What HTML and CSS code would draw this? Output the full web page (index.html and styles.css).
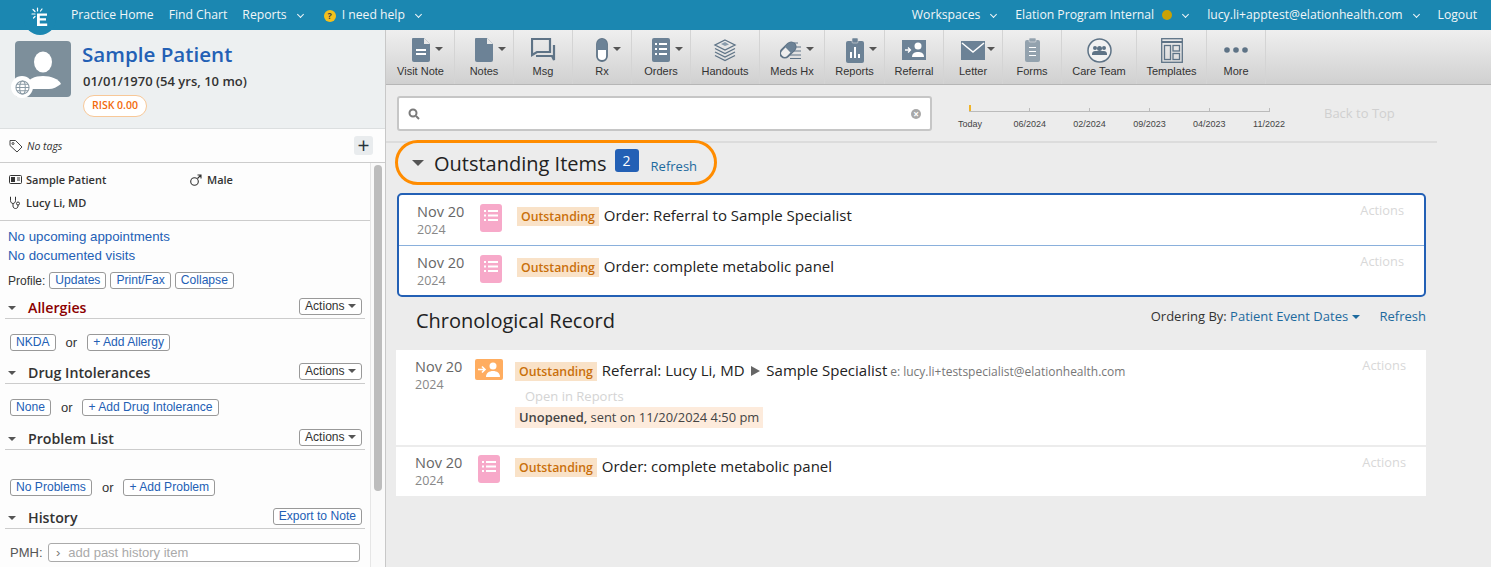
FILE: index.html
```html
<!DOCTYPE html>
<html lang="en">

<head>
    <meta charset="UTF-8">
    <title>Sample Patient</title>
    <link rel="stylesheet" href="styles.css">
</head>

<body>
    <header class="topbar">
        <div class="logo">
            <svg width="24" height="30" viewBox="0 0 24 30">
                <g stroke="#fff" stroke-width="1.200" stroke-linecap="round">
                    <path d="M9.500 8v3M5 9.500l2 2M4 14h3M5.500 18l1.500-1.500M14 9l-1.500 2" />
                </g>
                <path d="M9 13.500h10v2.300h-7.200v2.500h6.200v2.300h-6.200v3h7.400v2.400H9z" fill="#fff" />
            </svg>
        </div>
        <nav class="nav-left">
            <a>Practice Home</a>
            <a>Find Chart</a>
            <a class="has-chev">Reports</a>
            <a class="has-chev help"><span class="help-dot">?</span>I need help</a>
        </nav>
        <nav class="nav-right">
            <a class="has-chev">Workspaces</a>
            <a class="has-chev">Elation Program Internal<span class="status-dot"></span></a>
            <a class="has-chev">lucy.li+apptest@elationhealth.com</a>
            <a>Logout</a>
        </nav>
    </header>

    <div class="layout">
        <aside class="sidebar">
            <div class="patient">
                <div class="avatar">
                    <svg width="56" height="56" viewBox="0 0 56 56">
                        <rect width="56" height="56" rx="4" fill="#7d8f9b" />
                        <ellipse cx="28" cy="21" rx="9" ry="10.500" fill="#fff" />
                        <path d="M10 46c2-8 10-11 18-11s16 3 18 8c-4 3-8 5-12 5H14z" fill="#fff" />
                    </svg>
                    <span class="globe">
                        <svg width="15" height="15" viewBox="0 0 16 16" fill="none" stroke="#8a9aa5" stroke-width="1.100">
                            <circle cx="8" cy="8" r="7" />
                            <ellipse cx="8" cy="8" rx="3" ry="7" />
                            <path d="M1 8h14M2 4.500h12M2 11.500h12" />
                        </svg>
                    </span>
                </div>
                <div class="patient-info">
                    <h1>Sample Patient</h1>
                    <p>01/01/1970 (54 yrs, 10 mo)</p>
                    <span class="risk">RISK 0.00</span>
                </div>
            </div>
            <div class="tags">
                <svg width="14" height="14" viewBox="0 0 14 14" fill="none" stroke="#444" stroke-width="1">
                    <path d="M1 1.500h5.500l6.500 6.500-5 5L1 6.500z" />
                    <circle cx="4" cy="4.500" r="1" />
                </svg>
                <em>No tags</em>
                <span class="tag-add">+</span>
            </div>
            <div class="side-scroll">
                <div class="side-body">
                    <div class="demo">
                        <div class="demo-row">
                            <span class="demo-name">
                                <svg width="13" height="9" viewBox="0 0 13 9">
                                    <rect x=".5" y=".5" width="12" height="8" rx="1" fill="none" stroke="#333" />
                                    <rect x="2" y="2" width="4" height="5" fill="#333" />
                                    <path d="M8 3h3M8 5h3" stroke="#333" />
                                </svg>
                                Sample Patient
                            </span>
                            <span class="demo-sex">
                                <svg width="12" height="12" viewBox="0 0 12 12" fill="none" stroke="#333" stroke-width="1.100">
                                    <circle cx="4.500" cy="7.500" r="3.800" />
                                    <path d="M7.500 4.500L11 1M7.500 1H11v3.500" />
                                </svg>
                                Male
                            </span>
                        </div>
                        <div class="demo-row">
                            <span class="demo-name">
                                <svg width="13" height="13" viewBox="0 0 12 13" fill="none" stroke="#333" stroke-width="1">
                                    <path d="M1.500 1H1v3.500c0 2 1.300 3 2.500 3S6 6.500 6 4.500V1h-.5M3.500 7.500V10c0 1.500 1 2.500 2.500 2.500S8.500 11.500 8.500 10V9" />
                                    <circle cx="8.500" cy="7.500" r="1.500" />
                                </svg>
                                Lucy Li, MD
                            </span>
                        </div>
                    </div>
                    <div class="appts">
                        <a>No upcoming appointments</a>
                        <a>No documented visits</a>
                        <div class="profile">Profile:
                            <span class="btn">Updates</span>
                            <span class="btn">Print/Fax</span>
                            <span class="btn">Collapse</span>
                        </div>
                    </div>

                    <section class="sec">
                        <div class="sec-head">
                            <i class="caret"></i>
                            <h3 class="alert">Allergies</h3>
                            <span class="btn btn-dark">Actions <i class="caret-sm"></i></span>
                        </div>
                        <div class="sec-line line-allergy">
                            <span class="btn">NKDA</span> <span class="or">or</span> <span class="btn">+ Add Allergy</span>
                        </div>
                    </section>
                    <section class="sec">
                        <div class="sec-head">
                            <i class="caret"></i>
                            <h3>Drug Intolerances</h3>
                            <span class="btn btn-dark">Actions <i class="caret-sm"></i></span>
                        </div>
                        <div class="sec-line line-drug">
                            <span class="btn">None</span> <span class="or">or</span> <span class="btn">+ Add Drug Intolerance</span>
                        </div>
                    </section>
                    <section class="sec">
                        <div class="sec-head">
                            <i class="caret"></i>
                            <h3>Problem List</h3>
                            <span class="btn btn-dark">Actions <i class="caret-sm"></i></span>
                        </div>
                        <div class="sec-line line-problem">
                            <span class="btn">No Problems</span> <span class="or">or</span> <span class="btn">+ Add Problem</span>
                        </div>
                    </section>
                    <section class="sec">
                        <div class="sec-head">
                            <i class="caret"></i>
                            <h3>History</h3>
                            <span class="btn">Export to Note</span>
                        </div>
                        <div class="pmh">
                            <label>PMH:</label>
                            <div class="pmh-input"><span class="pmh-chev">›</span>add past history item</div>
                        </div>
                    </section>
                </div>
                <div class="scroll-track"><div class="scroll-thumb"></div></div>
            </div>
        </aside>

        <main class="main">
            <div class="toolbar">
                <div class="tool">
                    <div class="tool-icon">
                        <svg width="18" height="24" viewBox="0 0 18 24">
                            <path d="M1 0h11l6 6v16a2 2 0 0 1-2 2H2a2 2 0 0 1-2-2V1a1 1 0 0 1 1-1z" fill="#6c8296" />
                            <path d="M12 0l6 6h-6z" fill="#e8e8e8" />
                            <path d="M4 11h10v2H4zM4 15h10v2H4z" fill="#fff" />
                        </svg>
                        <i class="tool-caret"></i>
                    </div>
                    Visit Note
                </div>
                <div class="tool">
                    <div class="tool-icon">
                        <svg width="18" height="24" viewBox="0 0 18 24">
                            <path d="M1 0h11l6 6v16a2 2 0 0 1-2 2H2a2 2 0 0 1-2-2V1a1 1 0 0 1 1-1z" fill="#6c8296" />
                            <path d="M12 0l6 6h-6z" fill="#e8e8e8" />
                        </svg>
                        <i class="tool-caret"></i>
                    </div>
                    Notes
                </div>
                <div class="tool">
                    <div class="tool-icon">
                        <svg width="25" height="24" viewBox="0 0 25 24" fill="none" stroke="#5e7386" stroke-width="2.200">
                            <path d="M1 1h18v13H6l-5 3z" />
                            <path d="M5 18h16l2 4V7" />
                        </svg>
                    </div>
                    Msg
                </div>
                <div class="tool">
                    <div class="tool-icon">
                        <svg width="12" height="24" viewBox="0 0 12 24">
                            <rect x="1" y="1" width="10" height="22" rx="5" fill="#fff" stroke="#5e7386" stroke-width="1.800" />
                            <path d="M1 12V6a5 5 0 0 1 10 0v6z" fill="#6c8296" />
                        </svg>
                        <i class="tool-caret"></i>
                    </div>
                    Rx
                </div>
                <div class="tool">
                    <div class="tool-icon">
                        <svg width="18" height="24" viewBox="0 0 18 24">
                            <rect width="18" height="24" rx="2" fill="#6c8296" />
                            <path d="M3 5h2v2H3zM7 5h8v2H7zM3 10h2v2H3zM7 10h8v2H7zM3 15h2v2H3zM7 15h8v2H7z" fill="#fff" />
                        </svg>
                        <i class="tool-caret"></i>
                    </div>
                    Orders
                </div>
                <div class="tool">
                    <div class="tool-icon">
                        <svg width="24" height="24" viewBox="0 0 24 24" fill="none" stroke="#5e7386" stroke-width="1.300">
                            <path d="M12 2l10 5-10 5L2 7z" />
                            <path d="M8 6l4-2 4 2.500-4 1.500z" fill="#8a9cac" stroke="none" />
                            <path d="M2 10.500l10 5 10-5M2 14l10 5 10-5M2 17.500l10 5 10-5" />
                        </svg>
                    </div>
                    Handouts
                </div>
                <div class="tool">
                    <div class="tool-icon">
                        <svg width="24" height="20" viewBox="0 0 24 20">
                            <path d="M14 3h4M13 7h8M11 11h10M10 15h11M10 18.500h11" stroke="#5e7386" stroke-width="1.200" />
                            <g transform="rotate(-45 8 10)">
                                <rect x="-1" y="5.500" width="18" height="9" rx="4.500" fill="#eee" stroke="#5e7386" stroke-width="1.800" />
                                <path d="M8 5.500h4.500a4.500 4.500 0 0 1 0 9H8z" fill="#6c8296" />
                            </g>
                        </svg>
                        <i class="tool-caret tool-caret-close"></i>
                    </div>
                    Meds Hx
                </div>
                <div class="tool">
                    <div class="tool-icon">
                        <svg width="18" height="25" viewBox="0 0 18 25">
                            <rect y="3" width="18" height="22" rx="2" fill="#6c8296" />
                            <rect x="6" y="0" width="6" height="5" rx="1" fill="#6c8296" stroke="#ddd" stroke-width=".6" />
                            <path d="M4 14h2v6H4zM8 9h2v11H8zM12 16h2v4h-2z" fill="#fff" />
                        </svg>
                        <i class="tool-caret"></i>
                    </div>
                    Reports
                </div>
                <div class="tool">
                    <div class="tool-icon">
                        <svg width="24" height="20" viewBox="0 0 24 20">
                            <rect width="24" height="20" fill="#6c8296" />
                            <circle cx="16" cy="6" r="3.500" fill="#fff" />
                            <path d="M10 17c0-4 3-5 6-5s6 1 6 5z" fill="#fff" />
                            <path d="M3 10h5M6 7.500l2.500 2.500L6 12.500" stroke="#fff" stroke-width="1.300" fill="none" />
                        </svg>
                    </div>
                    Referral
                </div>
                <div class="tool">
                    <div class="tool-icon">
                        <svg width="24" height="19" viewBox="0 0 24 19">
                            <rect width="24" height="19" fill="#6c8296" />
                            <path d="M1 2l11 9 11-9" fill="none" stroke="#fff" stroke-width="1.500" />
                        </svg>
                        <i class="tool-caret tool-caret-close"></i>
                    </div>
                    Letter
                </div>
                <div class="tool">
                    <div class="tool-icon">
                        <svg width="15" height="24" viewBox="0 0 15 24">
                            <rect y="2" width="15" height="22" rx="2" fill="#93a2ae" />
                            <rect x="4" y="0" width="7" height="4" rx="1" fill="#93a2ae" stroke="#e8e8e8" stroke-width=".6" />
                            <path d="M4 9h7v1H4zM4 13h7v1H4zM4 17h7v1H4z" fill="#fff" />
                        </svg>
                    </div>
                    Forms
                </div>
                <div class="tool">
                    <div class="tool-icon">
                        <svg width="25" height="25" viewBox="0 0 25 25">
                            <circle cx="12.500" cy="12.500" r="11.500" fill="#f2f2f2" stroke="#5e7386" stroke-width="1.500" />
                            <circle cx="8" cy="10" r="2" fill="#5e7386" />
                            <circle cx="17" cy="10" r="2" fill="#5e7386" />
                            <circle cx="12.500" cy="10.500" r="2.500" fill="#5e7386" />
                            <path d="M5 16c0-2 1.500-3 3-3h9c1.500 0 3 1 3 3v1H5z" fill="#5e7386" />
                        </svg>
                    </div>
                    Care Team
                </div>
                <div class="tool">
                    <div class="tool-icon">
                        <svg width="22" height="25" viewBox="0 0 22 25" fill="none" stroke="#5e7386" stroke-width="1.300">
                            <rect x=".7" y=".7" width="20.600" height="23.600" />
                            <path d="M1 4h20" stroke-width="2" />
                            <rect x="3.500" y="7.500" width="6" height="14" />
                            <rect x="12" y="7.500" width="6.500" height="5.500" />
                            <rect x="12" y="15.500" width="6.500" height="6" />
                        </svg>
                    </div>
                    Templates
                </div>
                <div class="tool">
                    <div class="tool-icon">
                        <svg width="24" height="6" viewBox="0 0 24 6" fill="#5e7386">
                            <circle cx="3" cy="3" r="2.800" />
                            <circle cx="12" cy="3" r="2.800" />
                            <circle cx="21" cy="3" r="2.800" />
                        </svg>
                    </div>
                    More
                </div>
            </div>

            <div class="content">
                <div class="search-row">
                    <div class="search-box">
                        <svg width="12" height="12" viewBox="0 0 12 12" fill="none" stroke="#7a7a7a" stroke-width="2">
                            <circle cx="5" cy="5" r="3.500" />
                            <path d="M8 8l3 3" />
                        </svg>
                        <span class="search-clear">×</span>
                    </div>
                    <div class="timeline">
                        <div class="tl-line"></div>
                        <div class="tl-labels">
                            <span>Today</span><span>06/2024</span><span>02/2024</span><span>09/2023</span><span>04/2023</span><span>11/2022</span>
                        </div>
                    </div>
                    <span class="back-top">Back to Top</span>
                </div>

                <div class="outstanding-head">
                    <i class="caret caret-lg"></i>
                    <h2>Outstanding Items</h2>
                    <span class="count">2</span>
                    <a class="link">Refresh</a>
                </div>

                <div class="out-card">
                    <div class="item out-item">
                        <div class="item-date"><b>Nov 20</b><span>2024</span></div>
                        <div class="order-icon">
                            <svg width="14" height="11" viewBox="0 0 14 11" fill="#fff">
                                <path d="M0 0h2v2H0zM4 0h10v2H4zM0 4.500h2v2H0zM4 4.500h10v2H4zM0 9h2v2H0zM4 9h10v2H4z" />
                            </svg>
                        </div>
                        <div class="item-main"><span class="flag">Outstanding</span> Order: Referral to Sample Specialist</div>
                        <span class="item-actions">Actions</span>
                    </div>
                    <div class="item out-item">
                        <div class="item-date"><b>Nov 20</b><span>2024</span></div>
                        <div class="order-icon">
                            <svg width="14" height="11" viewBox="0 0 14 11" fill="#fff">
                                <path d="M0 0h2v2H0zM4 0h10v2H4zM0 4.500h2v2H0zM4 4.500h10v2H4zM0 9h2v2H0zM4 9h10v2H4z" />
                            </svg>
                        </div>
                        <div class="item-main"><span class="flag">Outstanding</span> Order: complete metabolic panel</div>
                        <span class="item-actions">Actions</span>
                    </div>
                </div>

                <div class="chron-head">
                    <h2>Chronological Record</h2>
                    <div class="ordering">Ordering By: <a class="link">Patient Event Dates <i class="caret-blue"></i></a></div>
                    <a class="link chron-refresh">Refresh</a>
                </div>

                <div class="chron-list">
                    <div class="item chron-item chron-referral">
                        <div class="item-date"><b>Nov 20</b><span>2024</span></div>
                        <div class="referral-icon">
                            <svg width="24" height="15" viewBox="0 0 24 15">
                                <circle cx="16" cy="4" r="3.500" fill="#fff" />
                                <path d="M9 15c0-4 3-6 7-6s7 2 7 6z" fill="#fff" />
                                <path d="M1 7.500h6M5 4.500l3 3-3 3" stroke="#fff" stroke-width="1.600" fill="none" />
                            </svg>
                        </div>
                        <div class="item-main">
                            <div><span class="flag">Outstanding</span> Referral: Lucy Li, MD <i class="arrow"></i> Sample Specialist <span class="email">e: lucy.li+testspecialist@elationhealth.com</span></div>
                            <div class="open-reports">Open in Reports</div>
                            <div class="unopened"><b>Unopened,</b> sent on 11/20/2024 4:50 pm</div>
                        </div>
                        <span class="item-actions">Actions</span>
                    </div>
                    <div class="item chron-item chron-order">
                        <div class="item-date"><b>Nov 20</b><span>2024</span></div>
                        <div class="order-icon">
                            <svg width="14" height="11" viewBox="0 0 14 11" fill="#fff">
                                <path d="M0 0h2v2H0zM4 0h10v2H4zM0 4.500h2v2H0zM4 4.500h10v2H4zM0 9h2v2H0zM4 9h10v2H4z" />
                            </svg>
                        </div>
                        <div class="item-main"><span class="flag">Outstanding</span> Order: complete metabolic panel</div>
                        <span class="item-actions">Actions</span>
                    </div>
                </div>
            </div>
        </main>
    </div>
</body>

</html>
```

FILE: styles.css
```css
html,
body {
    height: 100%;
}

body {
    margin: 0;
    overflow: hidden;
    display: flex;
    flex-direction: column;
    font-family: 'Open Sans', sans-serif;
    color: #222;
    background: #ececec;
}

h1,
h2,
h3,
p {
    margin: 0;
    font-weight: normal;
}

/* top bar */
.topbar {
    flex: none;
    position: relative;
    height: 30px;
    box-sizing: border-box;
    padding-bottom: 1px;
    display: flex;
    justify-content: space-between;
    align-items: center;
    background: #1b87b1;
    color: #f1f6f8;
    font-size: 12.200px;
    z-index: 2;
}

.topbar a {
    white-space: nowrap;
}

.logo {
    position: absolute;
    left: 24px;
    top: 0;
    width: 32px;
    height: 35px;
    display: flex;
    justify-content: center;
    background: #1b87b1;
    border-radius: 0 0 16px 16px;
}

.nav-left {
    display: flex;
    align-items: center;
    padding-left: 71px;
}

.nav-left a {
    margin-right: 15px;
}

.nav-right {
    display: flex;
    align-items: center;
    padding-right: 14px;
}

.nav-right a {
    margin-left: 19px;
}

.has-chev::after {
    content: '';
    display: inline-block;
    width: 4px;
    height: 4px;
    margin-left: 11px;
    margin-bottom: 2px;
    border-right: 1px solid #f1f6f8;
    border-bottom: 1px solid #f1f6f8;
    transform: rotate(45deg);
}

.nav-left .help {
    margin-left: 6px;
}

.help-dot {
    display: inline-block;
    width: 12px;
    height: 12px;
    margin-right: 6px;
    border-radius: 50%;
    background: #f3c11e;
    color: #444;
    font-size: 9px;
    font-weight: 700;
    line-height: 12px;
    text-align: center;
}

.status-dot {
    display: inline-block;
    width: 10px;
    height: 10px;
    margin-left: 8px;
    border-radius: 50%;
    background: #c9a205;
    vertical-align: -1px;
}

/* page layout */
.layout {
    flex: 1;
    min-height: 0;
    display: flex;
}

.sidebar {
    flex: none;
    width: 385px;
    border-right: 1px solid #c8c8c8;
    background: #fdfdfd;
    display: flex;
    flex-direction: column;
    overflow: hidden;
}

.patient {
    flex: none;
    height: 99px;
    box-sizing: border-box;
    padding: 11px 15px 0;
    display: flex;
    background: #edf0f1;
    border-bottom: 1px solid #dcdfe0;
}

.avatar {
    position: relative;
    width: 56px;
    height: 56px;
    margin-right: 12px;
}

.globe {
    position: absolute;
    left: -4px;
    bottom: -1px;
    width: 22px;
    height: 22px;
    border-radius: 50%;
    background: #fff;
    display: flex;
    align-items: center;
    justify-content: center;
}

.patient-info {
    margin-left: -1px;
}

.patient-info h1 {
    font-size: 20.600px;
    font-weight: 600;
    line-height: 27px;
    color: #2360b5;
}

.patient-info p {
    margin: 5px 0 0 1px;
    font-size: 13px;
    font-weight: 600;
    line-height: 16px;
    color: #333;
}

.risk {
    display: inline-block;
    margin: 6px 0 0 1px;
    padding: 0 8px;
    height: 20px;
    line-height: 18px;
    border: 1px solid #f8c898;
    border-radius: 11px;
    background: #fff;
    color: #f26a0c;
    font-size: 10.500px;
    font-weight: 600;
}

.tags {
    flex: none;
    height: 34px;
    box-sizing: border-box;
    padding: 0 15px 0 9px;
    display: flex;
    align-items: center;
    gap: 4px;
    border-bottom: 1px solid #ccc;
    font-size: 10.500px;
    color: #333;
}

.tag-add {
    margin-left: auto;
    margin-right: -3px;
    width: 19px;
    height: 19px;
    border-radius: 3px;
    background: #e9ecee;
    color: #26323a;
    font-size: 21px;
    line-height: 18px;
    text-align: center;
}

.side-scroll {
    flex: 1;
    min-height: 0;
    display: flex;
}

.side-body {
    flex: none;
    width: 370px;
    overflow: hidden;
}

.scroll-track {
    flex: 1;
    border-left: 1px solid #e6e6e6;
    background: #fafafa;
}

.scroll-thumb {
    width: 8px;
    height: 326px;
    margin: 2px 0 0 3px;
    border-radius: 4px;
    background: #bdbdbd;
}

.demo {
    height: 58px;
    box-sizing: border-box;
    padding-top: 5px;
    border-bottom: 1px solid #ccc;
    font-size: 11px;
    font-weight: 600;
    color: #333;
}

.demo-row {
    height: 23px;
    display: flex;
    align-items: center;
}

.demo-name {
    width: 190px;
    padding-left: 9px;
    box-sizing: border-box;
    display: flex;
    align-items: center;
    gap: 4px;
}

.demo-sex {
    display: flex;
    align-items: center;
    gap: 5px;
}

.appts {
    padding: 6px 0 0 8px;
    font-family: 'Liberation Sans', sans-serif;
    font-size: 13.300px;
    color: #2360b5;
}

.appts a {
    display: block;
    height: 19px;
    line-height: 19px;
}

.profile {
    margin-top: 7px;
    display: flex;
    align-items: center;
    gap: 4px;
    font-size: 12px;
    color: #333;
}

.btn {
    display: inline-block;
    box-sizing: border-box;
    height: 17px;
    padding: 0 5px;
    border: 1px solid #999;
    border-radius: 3px;
    background: #fff;
    color: #2360b5;
    font-family: 'Liberation Sans', sans-serif;
    font-size: 12.100px;
    line-height: 15px;
    white-space: nowrap;
}

.btn-dark {
    color: #333;
}

.caret-sm {
    display: inline-block;
    border-left: 4px solid transparent;
    border-right: 4px solid transparent;
    border-top: 4px solid #555;
    vertical-align: 2px;
}

.sec {
    padding: 0 5px;
}

.sec-head {
    height: 25px;
    box-sizing: border-box;
    display: flex;
    align-items: center;
    padding: 4px 3px 0 3px;
    border-bottom: 1px solid #ccc;
    margin-top: 8px;
}

.sec:nth-of-type(1) .sec-head {
    margin-top: 5px;
}

.sec:nth-of-type(3) .sec-head {
    margin-top: 9px;
}

.caret {
    flex: none;
    margin-right: 12px;
    border-left: 4px solid transparent;
    border-right: 4px solid transparent;
    border-top: 4px solid #555;
}

.sec-head h3 {
    flex: 1;
    padding-bottom: 2px;
    font-size: 14.200px;
    font-weight: 600;
    color: #333;
}

.sec-head h3.alert {
    color: #8b0000;
}

.sec-head .btn {
    margin-bottom: 4px;
}

.sec-line {
    display: flex;
    align-items: center;
    padding-left: 5px;
    font-family: 'Liberation Sans', sans-serif;
    font-size: 13px;
    color: #333;
}

.line-allergy {
    padding-top: 15px;
    gap: 10px;
}

.line-drug {
    padding-top: 15px;
    gap: 10px;
}

.line-problem {
    padding-top: 29px;
    gap: 10px;
}

.pmh {
    display: flex;
    align-items: center;
    padding: 14px 0 0 5px;
    font-family: 'Liberation Sans', sans-serif;
    font-size: 13px;
    color: #555;
}

.pmh label {
    width: 38px;
}

.pmh-input {
    width: 312px;
    height: 19px;
    box-sizing: border-box;
    padding-left: 7px;
    border: 1px solid #aaa;
    border-radius: 3px;
    background: #fff;
    color: #aaa;
    line-height: 17px;
}

.pmh-chev {
    margin-right: 8px;
    color: #777;
}

/* toolbar */
.main {
    flex: 1;
    min-width: 0;
    display: flex;
    flex-direction: column;
}

.toolbar {
    flex: none;
    height: 55px;
    box-sizing: border-box;
    display: flex;
    padding-left: 1px;
    background: linear-gradient(#efefef, #d0d0d0);
    border-bottom: 1px solid #b6b6b6;
}

.tool {
    box-sizing: border-box;
    width: 59px;
    padding-top: 6px;
    border-right: 1px solid #d4d4d4;
    font-family: 'Liberation Sans', sans-serif;
    font-size: 11px;
    color: #333;
    text-align: center;
    white-space: nowrap;
}

.tool:nth-child(1) { width: 68px; }
.tool:nth-child(6) { width: 69px; }
.tool:nth-child(7) { width: 65px; }
.tool:nth-child(8) { width: 60px; }
.tool:nth-child(12) { width: 75px; }
.tool:nth-child(13) { width: 70px; }

.tool-icon {
    height: 28px;
    margin-bottom: 1px;
    display: flex;
    align-items: center;
    justify-content: center;
}

/* negative margin keeps the icon itself centred over the label */
.tool-caret {
    margin: -2px -13px 0 5px;
    border-left: 4px solid transparent;
    border-right: 4px solid transparent;
    border-top: 4px solid #555;
}

.tool-caret-close {
    margin: -2px -10px 0 2px;
}

/* timeline and search */
.content {
    flex: 1;
    min-height: 0;
    overflow: hidden;
}

.search-row {
    width: 1051px;
    height: 58px;
    box-sizing: border-box;
    padding: 11px 0 0 11px;
    display: flex;
    border-bottom: 2px solid #dcdcdc;
}

.search-box {
    width: 535px;
    height: 35px;
    box-sizing: border-box;
    padding: 0 9px;
    display: flex;
    align-items: center;
    justify-content: space-between;
    background: #fff;
    border: 2px solid #c6c6c6;
    border-radius: 3px;
}

.search-clear {
    width: 10px;
    height: 10px;
    border-radius: 50%;
    background: #a8a8a8;
    color: #fff;
    font-size: 10px;
    font-weight: 700;
    line-height: 10px;
    text-align: center;
}

.timeline {
    width: 360px;
    margin-left: 7px;
    padding-top: 9px;
    font-family: 'Liberation Sans', sans-serif;
}

.tl-line {
    width: 301px;
    height: 6px;
    margin: 0 0 0 30px;
    border-bottom: 1px solid #bbb;
    background: linear-gradient(#f0b429, #f0b429) no-repeat 0 0 / 2px 100%, repeating-linear-gradient(to right, #bbb 0 1px, transparent 1px 60px) no-repeat 0 100% / 100% 3px;
}

.tl-labels {
    display: flex;
    margin: 7px 0 0 1px;
    font-size: 9px;
    color: #444;
}

.tl-labels span {
    width: 60px;
    text-align: center;
}

.back-top {
    margin: 8px 0 0 25px;
    font-size: 13px;
    color: #d0d0d0;
    white-space: nowrap;
}

/* outstanding items */
.outstanding-head {
    width: 322px;
    height: 45px;
    box-sizing: border-box;
    margin: -3px 0 0 9px;
    padding-left: 14px;
    display: flex;
    align-items: center;
    border: 3px solid #ff8c00;
    border-radius: 23px;
}

.caret-lg {
    margin-right: 10px;
    border-left-width: 6px;
    border-right-width: 6px;
    border-top-width: 6px;
}

.outstanding-head h2 {
    padding-top: 2px;
}

.outstanding-head h2,
.chron-head h2 {
    font-size: 20px;
    line-height: 27px;
    color: #222;
    white-space: nowrap;
}

.count {
    width: 24px;
    height: 23px;
    margin: -4px 12px 0 8px;
    border-radius: 3px;
    background: #2360b5;
    color: #fff;
    font-size: 14px;
    line-height: 23px;
    text-align: center;
}

.link {
    color: #1d6a9e;
    font-size: 13px;
}

.outstanding-head .link {
    padding-top: 6px;
}

.out-card {
    margin: 8px 65px 0 11px;
    box-sizing: border-box;
    height: 104px;
    background: #fff;
    border: 2px solid #2360b5;
    border-radius: 5px;
}

.item {
    display: flex;
    position: relative;
}

.out-item {
    height: 50px;
    padding: 7px 0 0 18px;
    box-sizing: border-box;
}

.out-item + .out-item {
    border-top: 1px solid #8ab0dc;
    height: 51px;
}

.item-date {
    width: 63px;
    flex: none;
}

.item-date b {
    display: block;
    font-size: 14.500px;
    font-weight: 400;
    line-height: 19px;
    color: #666;
}

.item-date span {
    display: block;
    font-size: 12.500px;
    line-height: 18px;
    color: #888;
}

.order-icon {
    flex: none;
    width: 22px;
    height: 28px;
    margin-top: 2px;
    padding-top: 6px;
    box-sizing: border-box;
    display: flex;
    justify-content: center;
    align-items: flex-start;
    border-radius: 3px;
    background: #f7a9c9;
}

.referral-icon {
    flex: none;
    width: 28px;
    height: 21px;
    margin: 2px -3px 0 -3px;
    display: flex;
    align-items: center;
    justify-content: center;
    border-radius: 2px;
    background: #ffad60;
}

.item-main {
    flex: 1;
    padding: 4px 0 0 15px;
    font-size: 15px;
    line-height: 19px;
    color: #222;
    white-space: nowrap;
}

.flag {
    display: inline-block;
    padding: 0 4px;
    margin-right: 1px;
    background: #f9e2c8;
    color: #c96f0a;
    font-size: 12.300px;
    font-weight: 600;
}

.item-actions {
    position: absolute;
    right: 20px;
    top: 6px;
    font-size: 12.800px;
    color: #d8d8d8;
}

/* chronological record */
.chron-head {
    margin: 8px 65px 0 30px;
    height: 30px;
    display: flex;
    align-items: center;
}

.ordering {
    margin-left: auto;
    margin-top: -8px;
    font-size: 13px;
    color: #333;
}

.chron-refresh {
    margin: -8px 0 0 20px;
}

.ordering .link {
    font-size: 13px;
}

.caret-blue {
    display: inline-block;
    border-left: 4px solid transparent;
    border-right: 4px solid transparent;
    border-top: 4px solid #1d6a9e;
    vertical-align: 2px;
}

.chron-list {
    margin: 15px 65px 0 10px;
    background: #fff;
}

.chron-item {
    padding: 7px 0 0 19px;
    height: 49px;
    box-sizing: border-box;
}

.chron-referral {
    height: 97px;
    border-bottom: 2px solid #ececec;
}

.chron-order {
    padding-top: 6px;
}

.arrow {
    display: inline-block;
    margin: 0 2px 0 3px;
    border-top: 5px solid transparent;
    border-bottom: 5px solid transparent;
    border-left: 9px solid #666;
}

.email {
    margin-left: -1px;
    font-size: 12px;
    color: #777;
}

.open-reports {
    margin: 6px 0 0 10px;
    font-size: 13px;
    line-height: 18px;
    color: #d4d4d4;
}

.unopened {
    display: inline-block;
    margin-top: 2px;
    padding: 0 4px;
    background: #fdebdc;
    font-size: 12.900px;
    line-height: 21px;
    color: #444;
}

.unopened b {
    font-weight: 600;
}
```
